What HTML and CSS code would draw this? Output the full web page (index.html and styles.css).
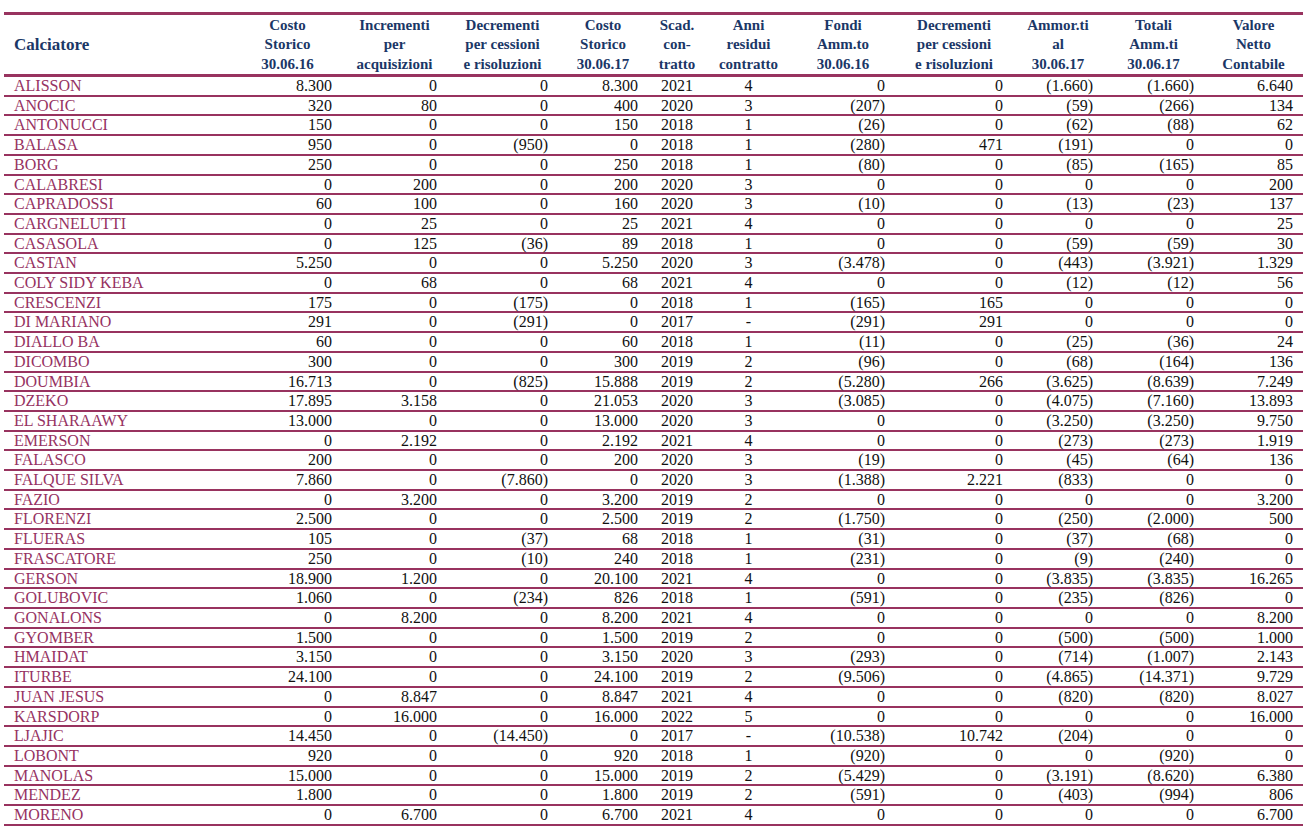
FILE: index.html
```html
<!DOCTYPE html>
<html lang="it">
<head>
<meta charset="utf-8">
<title>Calciatori</title>
<link rel="stylesheet" href="styles.css">
</head>
<body>
<table class="sheet">
<colgroup>
<col class="c1"><col class="c2"><col class="c3"><col class="c4"><col class="c5"><col class="c6"><col class="c7"><col class="c8"><col class="c9"><col class="c10"><col class="c11"><col class="c12">
</colgroup>
<thead>
<tr>
<th class="first">Calciatore</th>
<th>Costo<br>Storico<br>30.06.16</th>
<th>Incrementi<br>per<br>acquisizioni</th>
<th>Decrementi<br>per cessioni<br>e risoluzioni</th>
<th>Costo<br>Storico<br>30.06.17</th>
<th>Scad.<br>con-<br>tratto</th>
<th>Anni<br>residui<br>contratto</th>
<th>Fondi<br>Amm.to<br>30.06.16</th>
<th>Decrementi<br>per cessioni<br>e risoluzioni</th>
<th>Ammor.ti<br>al<br>30.06.17</th>
<th>Totali<br>Amm.ti<br>30.06.17</th>
<th>Valore<br>Netto<br>Contabile</th>
</tr>
</thead>
<tbody>
<tr><td class="name">ALISSON</td><td>8.300</td><td>0</td><td>0</td><td>8.300</td><td class="ctr">2021</td><td class="ctr">4</td><td>0</td><td>0</td><td>(1.660)</td><td>(1.660)</td><td>6.640</td></tr>
<tr><td class="name">ANOCIC</td><td>320</td><td>80</td><td>0</td><td>400</td><td class="ctr">2020</td><td class="ctr">3</td><td>(207)</td><td>0</td><td>(59)</td><td>(266)</td><td>134</td></tr>
<tr><td class="name">ANTONUCCI</td><td>150</td><td>0</td><td>0</td><td>150</td><td class="ctr">2018</td><td class="ctr">1</td><td>(26)</td><td>0</td><td>(62)</td><td>(88)</td><td>62</td></tr>
<tr><td class="name">BALASA</td><td>950</td><td>0</td><td>(950)</td><td>0</td><td class="ctr">2018</td><td class="ctr">1</td><td>(280)</td><td>471</td><td>(191)</td><td>0</td><td>0</td></tr>
<tr><td class="name">BORG</td><td>250</td><td>0</td><td>0</td><td>250</td><td class="ctr">2018</td><td class="ctr">1</td><td>(80)</td><td>0</td><td>(85)</td><td>(165)</td><td>85</td></tr>
<tr><td class="name">CALABRESI</td><td>0</td><td>200</td><td>0</td><td>200</td><td class="ctr">2020</td><td class="ctr">3</td><td>0</td><td>0</td><td>0</td><td>0</td><td>200</td></tr>
<tr><td class="name">CAPRADOSSI</td><td>60</td><td>100</td><td>0</td><td>160</td><td class="ctr">2020</td><td class="ctr">3</td><td>(10)</td><td>0</td><td>(13)</td><td>(23)</td><td>137</td></tr>
<tr><td class="name">CARGNELUTTI</td><td>0</td><td>25</td><td>0</td><td>25</td><td class="ctr">2021</td><td class="ctr">4</td><td>0</td><td>0</td><td>0</td><td>0</td><td>25</td></tr>
<tr><td class="name">CASASOLA</td><td>0</td><td>125</td><td>(36)</td><td>89</td><td class="ctr">2018</td><td class="ctr">1</td><td>0</td><td>0</td><td>(59)</td><td>(59)</td><td>30</td></tr>
<tr><td class="name">CASTAN</td><td>5.250</td><td>0</td><td>0</td><td>5.250</td><td class="ctr">2020</td><td class="ctr">3</td><td>(3.478)</td><td>0</td><td>(443)</td><td>(3.921)</td><td>1.329</td></tr>
<tr><td class="name">COLY SIDY KEBA</td><td>0</td><td>68</td><td>0</td><td>68</td><td class="ctr">2021</td><td class="ctr">4</td><td>0</td><td>0</td><td>(12)</td><td>(12)</td><td>56</td></tr>
<tr><td class="name">CRESCENZI</td><td>175</td><td>0</td><td>(175)</td><td>0</td><td class="ctr">2018</td><td class="ctr">1</td><td>(165)</td><td>165</td><td>0</td><td>0</td><td>0</td></tr>
<tr><td class="name">DI MARIANO</td><td>291</td><td>0</td><td>(291)</td><td>0</td><td class="ctr">2017</td><td class="ctr">-</td><td>(291)</td><td>291</td><td>0</td><td>0</td><td>0</td></tr>
<tr><td class="name">DIALLO BA</td><td>60</td><td>0</td><td>0</td><td>60</td><td class="ctr">2018</td><td class="ctr">1</td><td>(11)</td><td>0</td><td>(25)</td><td>(36)</td><td>24</td></tr>
<tr><td class="name">DICOMBO</td><td>300</td><td>0</td><td>0</td><td>300</td><td class="ctr">2019</td><td class="ctr">2</td><td>(96)</td><td>0</td><td>(68)</td><td>(164)</td><td>136</td></tr>
<tr><td class="name">DOUMBIA</td><td>16.713</td><td>0</td><td>(825)</td><td>15.888</td><td class="ctr">2019</td><td class="ctr">2</td><td>(5.280)</td><td>266</td><td>(3.625)</td><td>(8.639)</td><td>7.249</td></tr>
<tr><td class="name">DZEKO</td><td>17.895</td><td>3.158</td><td>0</td><td>21.053</td><td class="ctr">2020</td><td class="ctr">3</td><td>(3.085)</td><td>0</td><td>(4.075)</td><td>(7.160)</td><td>13.893</td></tr>
<tr><td class="name">EL SHARAAWY</td><td>13.000</td><td>0</td><td>0</td><td>13.000</td><td class="ctr">2020</td><td class="ctr">3</td><td>0</td><td>0</td><td>(3.250)</td><td>(3.250)</td><td>9.750</td></tr>
<tr><td class="name">EMERSON</td><td>0</td><td>2.192</td><td>0</td><td>2.192</td><td class="ctr">2021</td><td class="ctr">4</td><td>0</td><td>0</td><td>(273)</td><td>(273)</td><td>1.919</td></tr>
<tr><td class="name">FALASCO</td><td>200</td><td>0</td><td>0</td><td>200</td><td class="ctr">2020</td><td class="ctr">3</td><td>(19)</td><td>0</td><td>(45)</td><td>(64)</td><td>136</td></tr>
<tr><td class="name">FALQUE SILVA</td><td>7.860</td><td>0</td><td>(7.860)</td><td>0</td><td class="ctr">2020</td><td class="ctr">3</td><td>(1.388)</td><td>2.221</td><td>(833)</td><td>0</td><td>0</td></tr>
<tr><td class="name">FAZIO</td><td>0</td><td>3.200</td><td>0</td><td>3.200</td><td class="ctr">2019</td><td class="ctr">2</td><td>0</td><td>0</td><td>0</td><td>0</td><td>3.200</td></tr>
<tr><td class="name">FLORENZI</td><td>2.500</td><td>0</td><td>0</td><td>2.500</td><td class="ctr">2019</td><td class="ctr">2</td><td>(1.750)</td><td>0</td><td>(250)</td><td>(2.000)</td><td>500</td></tr>
<tr><td class="name">FLUERAS</td><td>105</td><td>0</td><td>(37)</td><td>68</td><td class="ctr">2018</td><td class="ctr">1</td><td>(31)</td><td>0</td><td>(37)</td><td>(68)</td><td>0</td></tr>
<tr><td class="name">FRASCATORE</td><td>250</td><td>0</td><td>(10)</td><td>240</td><td class="ctr">2018</td><td class="ctr">1</td><td>(231)</td><td>0</td><td>(9)</td><td>(240)</td><td>0</td></tr>
<tr><td class="name">GERSON</td><td>18.900</td><td>1.200</td><td>0</td><td>20.100</td><td class="ctr">2021</td><td class="ctr">4</td><td>0</td><td>0</td><td>(3.835)</td><td>(3.835)</td><td>16.265</td></tr>
<tr><td class="name">GOLUBOVIC</td><td>1.060</td><td>0</td><td>(234)</td><td>826</td><td class="ctr">2018</td><td class="ctr">1</td><td>(591)</td><td>0</td><td>(235)</td><td>(826)</td><td>0</td></tr>
<tr><td class="name">GONALONS</td><td>0</td><td>8.200</td><td>0</td><td>8.200</td><td class="ctr">2021</td><td class="ctr">4</td><td>0</td><td>0</td><td>0</td><td>0</td><td>8.200</td></tr>
<tr><td class="name">GYOMBER</td><td>1.500</td><td>0</td><td>0</td><td>1.500</td><td class="ctr">2019</td><td class="ctr">2</td><td>0</td><td>0</td><td>(500)</td><td>(500)</td><td>1.000</td></tr>
<tr><td class="name">HMAIDAT</td><td>3.150</td><td>0</td><td>0</td><td>3.150</td><td class="ctr">2020</td><td class="ctr">3</td><td>(293)</td><td>0</td><td>(714)</td><td>(1.007)</td><td>2.143</td></tr>
<tr><td class="name">ITURBE</td><td>24.100</td><td>0</td><td>0</td><td>24.100</td><td class="ctr">2019</td><td class="ctr">2</td><td>(9.506)</td><td>0</td><td>(4.865)</td><td>(14.371)</td><td>9.729</td></tr>
<tr><td class="name">JUAN JESUS</td><td>0</td><td>8.847</td><td>0</td><td>8.847</td><td class="ctr">2021</td><td class="ctr">4</td><td>0</td><td>0</td><td>(820)</td><td>(820)</td><td>8.027</td></tr>
<tr><td class="name">KARSDORP</td><td>0</td><td>16.000</td><td>0</td><td>16.000</td><td class="ctr">2022</td><td class="ctr">5</td><td>0</td><td>0</td><td>0</td><td>0</td><td>16.000</td></tr>
<tr><td class="name">LJAJIC</td><td>14.450</td><td>0</td><td>(14.450)</td><td>0</td><td class="ctr">2017</td><td class="ctr">-</td><td>(10.538)</td><td>10.742</td><td>(204)</td><td>0</td><td>0</td></tr>
<tr><td class="name">LOBONT</td><td>920</td><td>0</td><td>0</td><td>920</td><td class="ctr">2018</td><td class="ctr">1</td><td>(920)</td><td>0</td><td>0</td><td>(920)</td><td>0</td></tr>
<tr><td class="name">MANOLAS</td><td>15.000</td><td>0</td><td>0</td><td>15.000</td><td class="ctr">2019</td><td class="ctr">2</td><td>(5.429)</td><td>0</td><td>(3.191)</td><td>(8.620)</td><td>6.380</td></tr>
<tr><td class="name">MENDEZ</td><td>1.800</td><td>0</td><td>0</td><td>1.800</td><td class="ctr">2019</td><td class="ctr">2</td><td>(591)</td><td>0</td><td>(403)</td><td>(994)</td><td>806</td></tr>
<tr><td class="name">MORENO</td><td>0</td><td>6.700</td><td>0</td><td>6.700</td><td class="ctr">2021</td><td class="ctr">4</td><td>0</td><td>0</td><td>0</td><td>0</td><td>6.700</td></tr>
</tbody>
</table>
</body>
</html>
```

FILE: styles.css
```css
html, body {
  margin: 0;
  padding: 0;
  background: #ffffff;
}

body {
  padding: 12px 3px 0 4px;
  font-family: "Liberation Serif", "Times New Roman", serif;
}

.sheet {
  width: 1299px;
  table-layout: fixed;
  border-collapse: separate;
  border-spacing: 0;
}

.c1 { width: 229px; }
.c2 { width: 109px; }
.c3 { width: 105px; }
.c4 { width: 111px; }
.c5 { width: 90px; }
.c6 { width: 58px; }
.c7 { width: 85px; }
.c8 { width: 104px; }
.c9 { width: 118px; }
.c10 { width: 90px; }
.c11 { width: 101px; }
.c12 { width: 99px; }

.sheet th {
  border-top: 3px solid #98335f;
  border-bottom: 3px solid #98335f;
  padding: 0.5px 0 0 0;
  font-size: 15px;
  line-height: 19.5px;
  font-weight: bold;
  color: #1b3767;
  text-align: center;
  vertical-align: middle;
  white-space: nowrap;
}

.sheet th.first {
  text-align: left;
  padding-left: 10px;
  font-size: 17px;
}

.sheet td {
  border-bottom: 2px solid #98335f;
  padding: 0 10px 0 0;
  font-size: 16px;
  line-height: 17.7px;
  color: #111111;
  text-align: right;
  white-space: nowrap;
}

.sheet td.name {
  text-align: left;
  padding: 0 0 0 10px;
  color: #963262;
}

.sheet td.ctr {
  text-align: center;
  padding: 0;
}
```
